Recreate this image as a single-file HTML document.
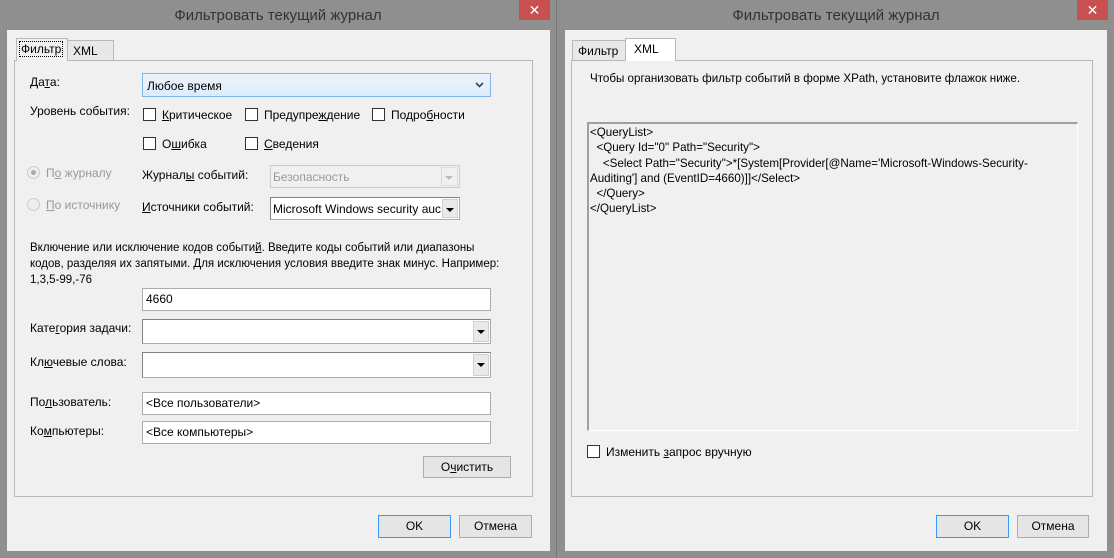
<!DOCTYPE html>
<html><head><meta charset="utf-8"><style>
*{box-sizing:border-box;margin:0;padding:0}
body{width:1114px;height:558px;background:#8f8f8f;font-family:"Liberation Sans","DejaVu Sans",sans-serif;font-size:12px;color:#000;position:relative;overflow:hidden}
.a{position:absolute;white-space:nowrap}
.win{position:absolute;top:0;height:558px;background:#8f8f8f}
.title{position:absolute;top:7px;font-size:15px;color:#333;width:100%;text-align:center}
.close{position:absolute;top:0;width:31px;height:20px;background:#c75050;color:#fff;text-align:center;font-size:14px;line-height:20px}
.content{position:absolute;background:#f0f0f0}
.page{position:absolute;border:1px solid #b9b9b9;background:#f0f0f0}
.tab{position:absolute;border:1px solid #b9b9b9;border-bottom:none;background:#e8e8e8;padding:3px 5px 0 5px}
.tab.sel{background:#f0f0f0;z-index:2;height:23px}
.inp{position:absolute;background:#fff;border:1px solid #acacac;padding:3px 3px;height:23px}
.cb{position:absolute;width:13px;height:13px;border:1px solid #333;background:#fff}
.combo{position:absolute;background:#fff;border:1px solid #acacac;border-top-color:#828282;border-left-color:#828282}
.combo .btn{position:absolute;right:1px;top:1px;bottom:1px;width:16px;background:#e9e9e9;border:1px solid #d0d0d0}
.combo .btn:after{content:"";position:absolute;left:3px;top:8px;border-left:4px solid transparent;border-right:4px solid transparent;border-top:4px solid #000}
.button{position:absolute;background:#e5e5e5;border:1px solid #acacac;text-align:center;line-height:20px}
.ok{border-color:#3399ff}
.g{color:#999}
u{text-decoration:underline}
</style></head><body>

<!-- LEFT WINDOW -->
<div class="win" style="left:0;width:557px;border-right:1px solid #777">
 <div class="title">Фильтровать текущий журнал</div>
 <div class="close" style="left:519px">✕</div>
 <div class="content" style="left:7px;top:30px;width:543px;height:521px"></div>
</div>
<div class="tab sel" style="left:16px;top:38px;width:52px;height:23px;padding:3px 3px 0 3px"><span style="outline:1px dotted #000;padding:0 1px">Фильтр</span></div>
<div class="tab" style="left:67px;top:40px;width:47px;height:20px">XML</div>
<div class="page" style="left:14px;top:60px;width:519px;height:437px"></div>

<div class="a" style="left:30px;top:75px">Да<u>т</u>а:</div>
<div class="a" style="left:142px;top:73px;width:349px;height:24px;border:1px solid #7eb4ea;background:linear-gradient(#ecf4fc,#dcecfc)"><span class="a" style="left:4px;top:5px">Любое время</span>
<svg class="a" style="right:6px;top:8px" width="9" height="6" viewBox="0 0 9 6"><path d="M1 1 L4.5 4.5 L8 1" fill="none" stroke="#444" stroke-width="1.6"/></svg></div>

<div class="a" style="left:30px;top:104px">Уровень события:</div>
<div class="cb" style="left:143px;top:108px"></div><div class="a" style="left:162px;top:108px"><u>К</u>ритическое</div>
<div class="cb" style="left:245px;top:108px"></div><div class="a" style="left:264px;top:108px">Предупре<u>ж</u>дение</div>
<div class="cb" style="left:372px;top:108px"></div><div class="a" style="left:391px;top:108px">Подро<u>б</u>ности</div>
<div class="cb" style="left:143px;top:137px"></div><div class="a" style="left:162px;top:137px">О<u>ш</u>ибка</div>
<div class="cb" style="left:245px;top:137px"></div><div class="a" style="left:264px;top:137px"><u>С</u>ведения</div>

<div class="a" style="left:27px;top:166px;width:13px;height:13px;border-radius:50%;border:1px solid #ccc;background:#eee"><div style="position:absolute;left:3px;top:3px;width:5px;height:5px;border-radius:50%;background:#aaa"></div></div>
<div class="a g" style="left:46px;top:166px">П<u>о</u> журналу</div>
<div class="a" style="left:27px;top:198px;width:13px;height:13px;border-radius:50%;border:1px solid #ccc;background:#eee"></div>
<div class="a g" style="left:46px;top:198px"><u>П</u>о источнику</div>

<div class="a" style="left:142px;top:168px">Журнал<u>ы</u> событий:</div>
<div class="a" style="left:270px;top:165px;width:190px;height:23px;border:1px solid #ccc;background:#f0f0f0"><span class="a g" style="left:2px;top:4px">Безопасность</span><div class="a" style="right:1px;top:1px;width:17px;height:19px;border:1px solid #ddd"></div><div class="a" style="right:6px;top:10px;border-left:4px solid transparent;border-right:4px solid transparent;border-top:4px solid #bbb"></div></div>
<div class="a" style="left:142px;top:200px"><u>И</u>сточники событий:</div>
<div class="combo" style="left:270px;top:197px;width:190px;height:23px"><span class="a" style="left:2px;top:4px">Microsoft Windows security auc</span><div class="btn"></div></div>

<div class="a" style="left:30px;top:240px;line-height:16px;font-size:11.5px">Включение или исключение кодов событи<u>й</u>. Введите коды событий или диапазоны<br>кодов, разделяя их запятыми. Для исключения условия введите знак минус. Например:<br>1,3,5-99,-76</div>
<div class="inp" style="left:142px;top:288px;width:349px">4660</div>

<div class="a" style="left:30px;top:321px">Кате<u>г</u>ория задачи:</div>
<div class="combo" style="left:142px;top:319px;width:349px;height:25px"><div class="btn"></div></div>
<div class="a" style="left:30px;top:355px">Кл<u>ю</u>чевые слова:</div>
<div class="combo" style="left:142px;top:352px;width:349px;height:26px"><div class="btn"></div></div>

<div class="a" style="left:30px;top:395px">По<u>л</u>ьзователь:</div>
<div class="inp" style="left:142px;top:392px;width:349px">&lt;Все пользователи&gt;</div>
<div class="a" style="left:30px;top:424px">Ко<u>м</u>пьютеры:</div>
<div class="inp" style="left:142px;top:421px;width:349px">&lt;Все компьютеры&gt;</div>
<div class="button" style="left:423px;top:456px;width:88px;height:22px">О<u>ч</u>истить</div>

<div class="button ok" style="left:378px;top:515px;width:73px;height:23px">OK</div>
<div class="button" style="left:459px;top:515px;width:73px;height:23px">Отмена</div>

<!-- RIGHT WINDOW -->
<div class="win" style="left:558px;width:556px">
 <div class="title">Фильтровать текущий журнал</div>
 <div class="close" style="left:519px">✕</div>
 <div class="content" style="left:7px;top:30px;width:542px;height:521px"></div>
</div>
<div class="tab" style="left:572px;top:40px;width:54px;height:20px">Фильтр</div>
<div class="tab sel" style="left:625px;top:38px;width:51px;height:23px;background:#fff;padding-left:8px">XML</div>
<div class="page" style="left:571px;top:60px;width:522px;height:437px"></div>
<div class="a" style="left:590px;top:72px;font-size:11.6px">Чтобы организовать фильтр событий в форме XPath, установите флажок ниже.</div>
<div class="a" style="left:587px;top:122px;width:491px;height:309px;border:1px solid #fff;border-top:2px solid #a0a0a0;border-left:2px solid #a0a0a0;background:#f0f0f0"></div>
<div class="a" style="left:590px;top:125px;line-height:15.3px;font-size:11.6px;white-space:pre">&lt;QueryList&gt;
  &lt;Query Id="0" Path="Security"&gt;
    &lt;Select Path="Security"&gt;*[System[Provider[@Name='Microsoft-Windows-Security-
Auditing'] and (EventID=4660)]]&lt;/Select&gt;
  &lt;/Query&gt;
&lt;/QueryList&gt;</div>
<div class="cb" style="left:587px;top:445px"></div>
<div class="a" style="left:606px;top:445px">Изменить <u>з</u>апрос вручную</div>

<div class="button ok" style="left:936px;top:515px;width:73px;height:23px">OK</div>
<div class="button" style="left:1017px;top:515px;width:72px;height:23px">Отмена</div>
</body></html>
